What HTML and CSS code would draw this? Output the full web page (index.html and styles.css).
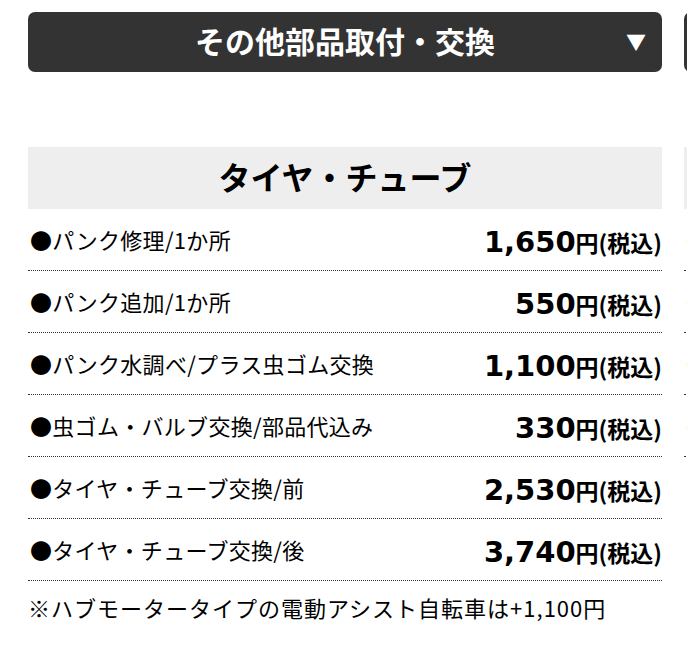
FILE: index.html
```html
<!DOCTYPE html>
<html lang="ja">
<head>
<meta charset="utf-8">
<title>料金表</title>
<link rel="stylesheet" href="styles.css">
</head>
<body>
<div class="page">
  <div class="column">
    <div class="menu-btn"><span></span><span class="menu-title">その他部品取付・交換</span><span class="arrow">▼</span></div>
    <section class="price-section">
      <h2 class="section-head">タイヤ・チューブ</h2>
      <ul class="price-list">
        <li class="row"><span class="item">●パンク修理/1か所</span><span class="price"><b class="num">1,650</b><span class="unit">円(税込)</span></span></li>
        <li class="row"><span class="item">●パンク追加/1か所</span><span class="price"><b class="num">550</b><span class="unit">円(税込)</span></span></li>
        <li class="row"><span class="item">●パンク水調べ/プラス虫ゴム交換</span><span class="price"><b class="num">1,100</b><span class="unit">円(税込)</span></span></li>
        <li class="row"><span class="item">●虫ゴム・バルブ交換/部品代込み</span><span class="price"><b class="num">330</b><span class="unit">円(税込)</span></span></li>
        <li class="row"><span class="item">●タイヤ・チューブ交換/前</span><span class="price"><b class="num">2,530</b><span class="unit">円(税込)</span></span></li>
        <li class="row"><span class="item">●タイヤ・チューブ交換/後</span><span class="price"><b class="num">3,740</b><span class="unit">円(税込)</span></span></li>
      </ul>
      <p class="note">※ハブモータータイプの電動アシスト自転車は+1,100円</p>
    </section>
  </div>
  <div class="column">
    <div class="menu-btn"><span></span><span class="menu-title">ブレーキ・変速機</span><span class="arrow">▼</span></div>
    <section class="price-section">
      <h2 class="section-head">ブレーキ</h2>
      <ul class="price-list">
        <li class="row"><span class="item"><i class="dot">●</i>ブレーキ調整</span><span class="price"><b class="num">550</b><span class="unit">円(税込)</span></span></li>
        <li class="row"><span class="item"><i class="dot">●</i>ブレーキシュー交換</span><span class="price"><b class="num">1,100</b><span class="unit">円(税込)</span></span></li>
        <li class="row"><span class="item"><i class="dot">●</i>ブレーキワイヤー交換</span><span class="price"><b class="num">1,650</b><span class="unit">円(税込)</span></span></li>
        <li class="row"><span class="item"><i class="dot">●</i>ブレーキレバー交換</span><span class="price"><b class="num">1,650</b><span class="unit">円(税込)</span></span></li>
      </ul>
    </section>
  </div>
</div>
</body>
</html>
```
FILE: styles.css
```css
html, body {
  margin: 0;
  padding: 0;
  overflow: hidden;
  background: #fff;
}
body {
  font-family: "Noto Sans CJK JP", "Noto Sans", sans-serif;
  color: #000;
}
.page {
  display: flex;
  gap: 22px;
  padding: 12px 0 0 28px;
  width: max-content;
}
.column {
  width: 634px;
  flex: none;
}
.menu-btn {
  height: 60px;
  border-radius: 7px;
  background: #333;
  color: #fff;
  display: grid;
  grid-template-columns: 1fr auto 1fr;
  align-items: center;
}
.menu-title {
  font-size: 30px;
  font-weight: 700;
  line-height: 1;
  padding-bottom: 4px;
}
.arrow {
  justify-self: end;
  padding-right: 16px;
  font-size: 20px;
  line-height: 1;
}
.price-section {
  margin-top: 75px;
}
.section-head {
  margin: 0;
  height: 62px;
  background: #eee;
  display: flex;
  align-items: center;
  justify-content: center;
  font-size: 32px;
  font-weight: 700;
  line-height: 1;
  padding-bottom: 4px;
  box-sizing: border-box;
}
.price-list {
  list-style: none;
  margin: 0;
  padding: 0;
}
.row {
  height: 62px;
  box-sizing: border-box;
  border-bottom: 1px dotted #333;
  display: flex;
  align-items: center;
  justify-content: space-between;
  padding: 0 0 0 2px;
}
.item {
  font-size: 22px;
  line-height: 1;
  letter-spacing: 0.3px;
  padding-bottom: 1px;
}
.dot {
  font-style: normal;
  color: #f39800;
}
.price {
  display: flex;
  align-items: baseline;
  line-height: 1;
  padding-top: 5px;
}
.num {
  font-family: "DejaVu Sans", "Noto Sans", sans-serif;
  font-size: 29px;
  font-weight: 700;
}
.unit {
  font-size: 23px;
  font-weight: 700;
}
.note {
  margin: 12px 0 0;
  font-size: 22px;
  line-height: 1.3;
  letter-spacing: 1px;
}
```
